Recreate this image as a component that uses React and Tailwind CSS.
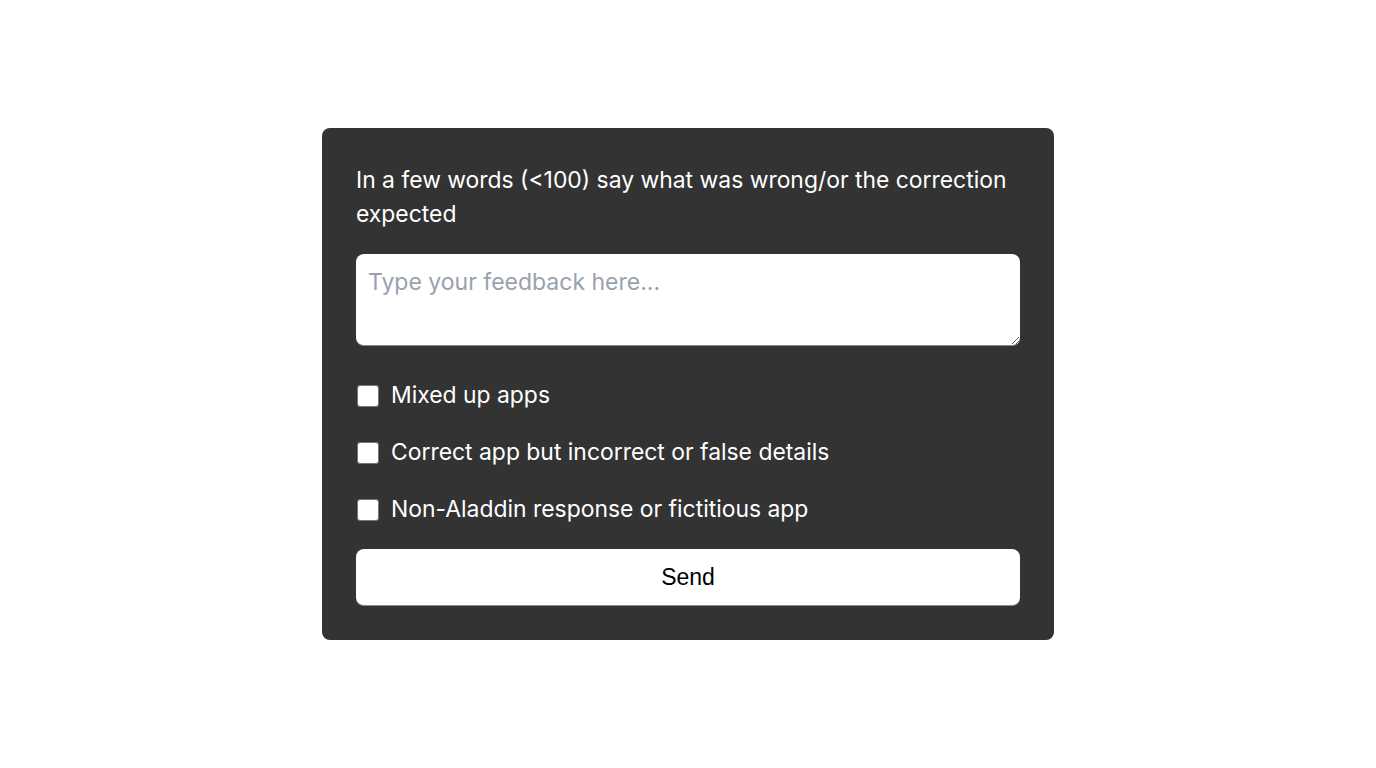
const options = [
  'Mixed up apps',
  'Correct app but incorrect or false details',
  'Non-Aladdin response or fictitious app',
];

export default function App() {
  return (
    <div className="min-h-screen w-full bg-white flex items-center justify-center font-['Inter',sans-serif]">
      <div className="w-[732px] bg-[#333333] rounded-lg px-[34px] pt-[35px] pb-[34px] flex flex-col">
        <p className="text-white text-[22.9px] leading-[34px]">
          In a few words (&lt;100) say what was wrong/or the correction expected
        </p>

        <textarea
          placeholder="Type your feedback here..."
          className="mt-[23px] h-[92px] w-full bg-white rounded-lg border-b border-[#8a8a8a] px-3 py-3 text-[23px] leading-[33px] text-gray-900 placeholder:text-gray-400 outline-none block"
        />

        <div className="mt-[33px] flex flex-col gap-6">
          {options.map((label) => (
            <label key={label} className="flex items-center gap-3 h-[33px] text-white text-[22.9px]">
              <input
                type="checkbox"
                className="appearance-none w-[22px] h-[22px] ml-px bg-white border border-[#767676] rounded-[3px] shrink-0"
              />
              <span>{label}</span>
            </label>
          ))}
        </div>

        <button className="mt-[23px] h-[57px] w-full bg-white rounded-lg border-b border-[#8a8a8a] text-black text-[23px] font-['Liberation_Sans',Arial,sans-serif]">
          Send
        </button>
      </div>
    </div>
  );
}
